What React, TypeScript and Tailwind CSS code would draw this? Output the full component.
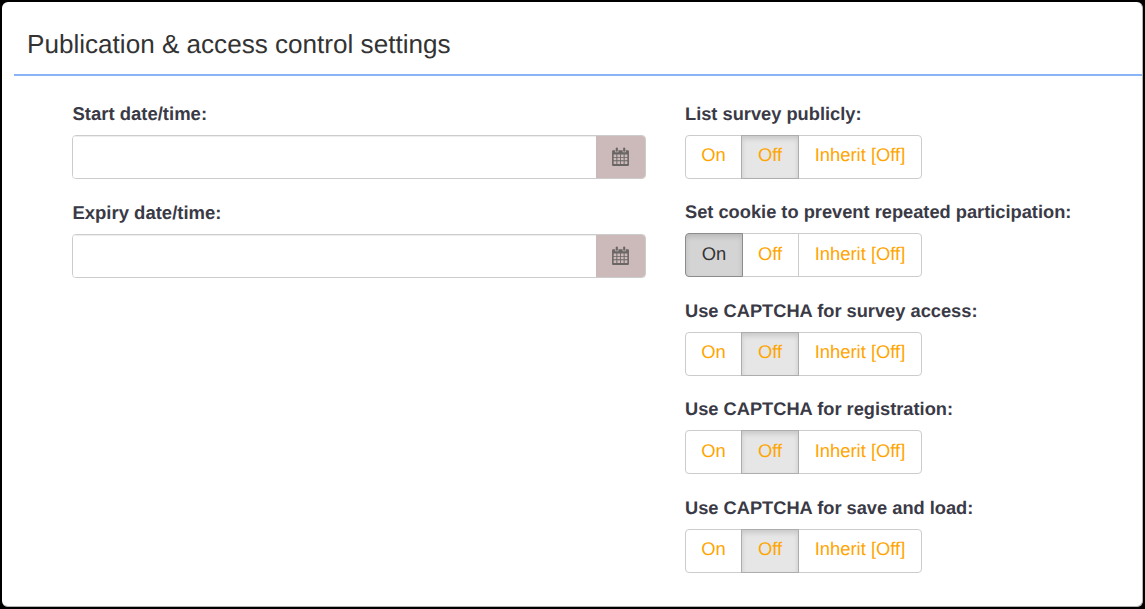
import React from 'react';
import { clsx } from 'clsx';

const DATE_FIELDS = ['Start date/time:', 'Expiry date/time:'];

const TOGGLES = [
  { label: 'List survey publicly:', value: 'Off' },
  { label: 'Set cookie to prevent repeated participation:', value: 'On' },
  { label: 'Use CAPTCHA for survey access:', value: 'Off' },
  { label: 'Use CAPTCHA for registration:', value: 'Off' },
  { label: 'Use CAPTCHA for save and load:', value: 'Off' },
];

function CalendarIcon() {
  return (
    <svg width="17" height="19" viewBox="0 0 16 18" className="text-[#6b6666]">
      <path fill="currentColor" d="M1 3h2v2h3V3h4v2h3V3h2a1 1 0 0 1 1 1v13a1 1 0 0 1-1 1H1a1 1 0 0 1-1-1V4a1 1 0 0 1 1-1z" />
      <rect x="3.5" y="0.5" width="2" height="4" rx="1" fill="currentColor" />
      <rect x="10.5" y="0.5" width="2" height="4" rx="1" fill="currentColor" />
      <path fill="#ccb9b9" d="M1.5 7h2.6v2.4H1.5zM5 7h2.6v2.4H5zM8.4 7H11v2.4H8.4zM11.9 7h2.6v2.4h-2.6zM1.5 10.2h2.6v2.4H1.5zM5 10.2h2.6v2.4H5zM8.4 10.2H11v2.4H8.4zM11.9 10.2h2.6v2.4h-2.6zM1.5 13.4h2.6v2.6H1.5zM5 13.4h2.6v2.6H5zM8.4 13.4H11v2.6H8.4zM11.9 13.4h2.6v2.6h-2.6z" />
    </svg>
  );
}

function ToggleGroup({ value }: { value: string }) {
  const options = [
    { text: 'On', width: 'w-[57px]' },
    { text: 'Off', width: 'w-[58px] -ml-px' },
    { text: 'Inherit [Off]', width: 'w-[124px] -ml-px' },
  ];
  return (
    <div className="flex h-[44px] w-[237px] text-[18.4px]">
      {options.map((opt, i) => {
        const active = opt.text === value;
        return (
          <div
            key={opt.text}
            className={clsx(
              'flex items-center justify-center border pb-[4px]',
              opt.width,
              i === 0 && 'rounded-l-[4px]',
              i === 2 && 'rounded-r-[4px]',
              active && opt.text === 'On' && 'relative z-10 !w-[58px] -mr-px bg-[#d4d4d4] border-[#8c8c8c] text-[#333333] shadow-[inset_0_3px_5px_rgba(0,0,0,0.125)]',
              active && opt.text !== 'On' && 'relative z-10 bg-[#e6e6e6] border-[#adadad] text-[#ffa500] shadow-[inset_0_3px_5px_rgba(0,0,0,0.125)]',
              !active && 'bg-white border-[#cccccc] text-[#ffa500]'
            )}
          >
            {opt.text}
          </div>
        );
      })}
    </div>
  );
}

export default function App() {
  return (
    <div className="h-[609px] bg-black p-[2px] font-['Liberation_Sans',Arial,sans-serif] [text-rendering:geometricPrecision]">
      <div className="h-full rounded-[6px] border-r border-b border-[#b4b4b4] bg-white">
        {/* Header */}
        <div className="ml-[12px] h-[74px] border-b-2 border-[#8ab4f8] pl-[13px] pt-[25px] text-[26.1px] leading-[34px] text-[#333333]">
          Publication &amp; access control settings
        </div>

        {/* Body */}
        <div className="flex pl-[70px] pt-[25px]">
          <div className="w-[574px]">
            {DATE_FIELDS.map((label) => (
              <div key={label} className="mb-[21px]">
                <div className="mb-[9px] h-[25px] pl-[0.4px] pt-[1px] text-[18.5px] font-bold leading-[24px] text-[#3a3a46]">{label}</div>
                <div className="flex h-[44px] overflow-hidden rounded-[4px] border border-[#cccccc]">
                  <div className="flex-1 bg-white shadow-[inset_0_1px_1px_rgba(0,0,0,0.075)]" />
                  <div className="flex w-[49px] items-center justify-center bg-[#ccb9b9] pb-[2px] pr-[1px]">
                    <CalendarIcon />
                  </div>
                </div>
              </div>
            ))}
          </div>

          <div className="ml-[39px] -mt-[0.1px]">
            {TOGGLES.map((t) => (
              <div key={t.label} className="mb-[20.5px]">
                <div className="mb-[9px] h-[25px] pt-[1px] text-[18.26px] font-bold leading-[24px] text-[#3a3a46]">{t.label}</div>
                <ToggleGroup value={t.value} />
              </div>
            ))}
          </div>
        </div>
      </div>
    </div>
  );
}
